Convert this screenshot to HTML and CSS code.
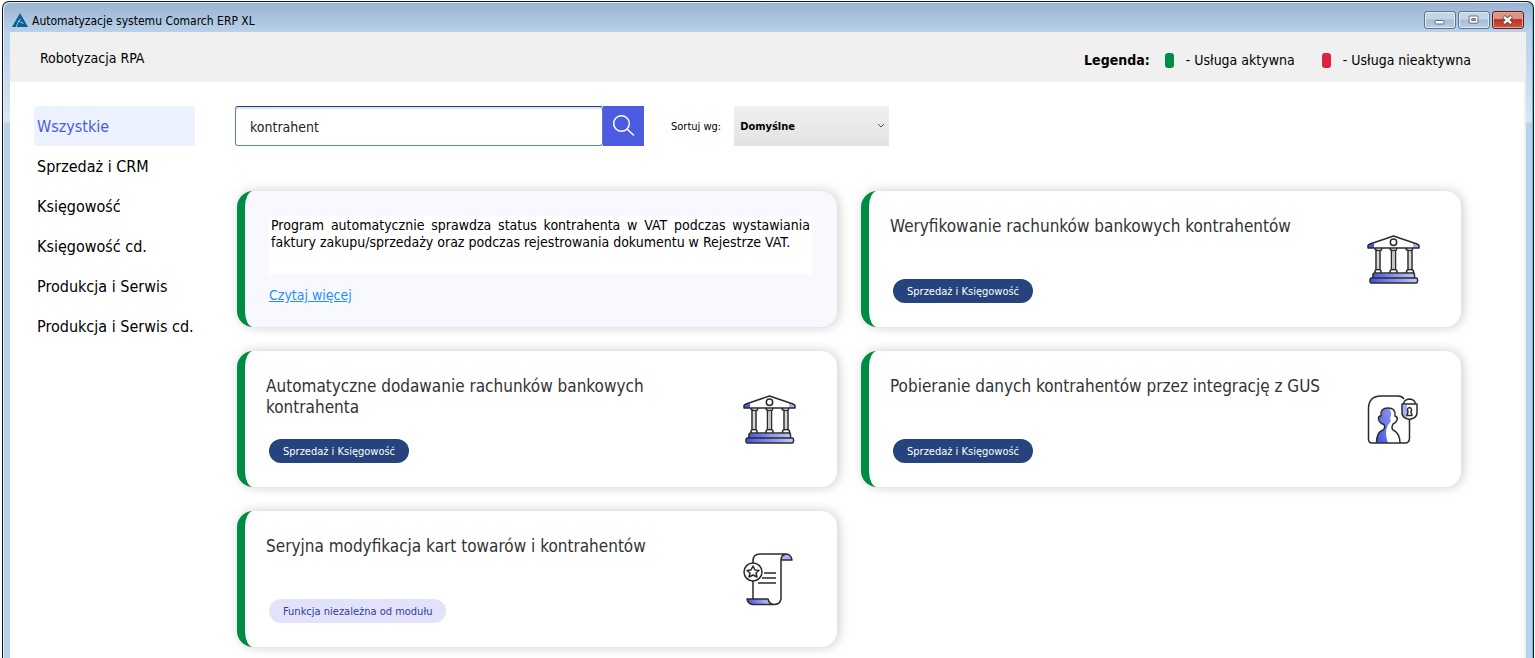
FILE: index.html
```
<!DOCTYPE html>
<html lang="pl">
<head>
<meta charset="utf-8">
<meta name="viewport" content="width=device-width, initial-scale=1">
<title>Automatyzacje systemu Comarch ERP XL</title>
<link rel="stylesheet" href="styles.css">
</head>
<body>
<svg class="defs" aria-hidden="true">
  <defs>
    <linearGradient id="violet" x1="0" x2="1" y1="0" y2="0">
      <stop offset="0" stop-color="#4353e0"/>
      <stop offset="1" stop-color="#c6caf8"/>
    </linearGradient>
    <linearGradient id="body-violet" x1="1" x2="0" y1="0" y2="1">
      <stop offset="0" stop-color="#8f98f2"/>
      <stop offset="1" stop-color="#3f50e0"/>
    </linearGradient>
    <symbol id="bank" viewBox="0 0 54 50">
      <path d="M1 13V10L7 7.500V13Z" fill="#4b5ae2"/>
      <path d="M52 13V10L46 7.500V13Z" fill="#aab0f5"/>
      <path d="M6 38.500H47L48 43H5Z" fill="url(#violet)"/>
      <rect x="3" y="43" width="47.500" height="5" rx="1.500" fill="url(#violet)"/>
      <g fill="none" stroke="#2b2b2b" stroke-width="1.500" stroke-linejoin="round">
        <path d="M1 13V10.500Q1.200 9.600 3 9L26.500 1L50 9Q52 9.600 52 10.500V13Z"/>
        <circle cx="26.500" cy="7.200" r="3.200"/>
        <path d="M8 13q0 2.500 3 2.500t3 0q0 0 1-2.500M9 15.500V35M13 15.500V35M8 38v-1.500q0-2 3-2t3 2V38"/>
        <path d="M23 13q0 2.500 3 2.500t3 0q0 0 1-2.500M24.500 15.500V35M28.500 15.500V35M23 38v-1.500q0-2 3.500-2t3.500 2V38"/>
        <path d="M39 13q0 2.500 3 2.500t3 0q0 0 1-2.500M41 15.500V35M45 15.500V35M39.500 38v-1.500q0-2 3.500-2t3.500 2V38"/>
        <path d="M6 43V39.500Q6 38 7.500 38H46Q47.500 38 47.500 39.500V43"/>
        <rect x="3" y="43" width="47.500" height="5" rx="1.500"/>
      </g>
      <path d="M11 17V34M26.500 17V34M43 17V34" stroke="#bbb" stroke-width="1.200"/>
    </symbol>
    <symbol id="person" viewBox="0 0 54 50">
      <path d="M9 48Q9 38 16 35Q19 34 17 30Q12 27 12 23Q12 20 14 20Q14 13 22 13.500Q26 18 23 23Q25 26 21 30Q17 37 21 48Z" fill="url(#body-violet)"/>
      <path d="M35 10H40V23L37 21Q35 20 35 18Z" fill="#aab0f5"/>
      <g fill="none" stroke="#2b2b2b" stroke-width="1.500" stroke-linejoin="round">
        <path d="M37 4Q35 1 31 1H14Q2 1 1.500 13V44Q1.500 48 5 48H38Q42.500 48 42.500 43V24.500"/>
        <path d="M9.500 48Q9.500 38 15 35.500Q19 34 17 29.500Q12 28 11.500 24Q11 21 14 21Q13 13 21 13Q29 13 28 21Q31 22 30 25Q29 28 26 29Q24 33 26 35Q33 38 33 48"/>
        <path d="M36.500 9Q37 4.500 42.500 4Q48 4.500 48.500 9M35 9H50V18Q50 21 47 23L42.500 24.500L38 23Q35 21 35 18Z"/>
        <path d="M41 17Q39.500 13 42.500 12.500Q45.500 13 44 17L45 20.500H40Z"/>
      </g>
    </symbol>
    <symbol id="scroll" viewBox="0 0 54 54">
      <path d="M38 7Q38 1 43 1Q48 1 49 7Z" fill="#aab0f5"/>
      <path d="M4 46H25Q27 48 28 51.500H10Q5 51 4 46Z" fill="url(#violet)"/>
      <g fill="none" stroke="#2b2b2b" stroke-width="1.500" stroke-linejoin="round">
        <path d="M10 10V8Q10 1 17 1H43Q48 1 49 7H38V46Q37 51.500 31 51.500H10Q5 51 4 46H25Q26 51 31 51.500M38 7Q38 2 43 1M10 27V46"/>
        <circle cx="10" cy="19" r="9" fill="#fff"/>
        <path d="M10 13L12 17L16 17.500L13 20L14 24L10 22L6 24L7 20L4 17.500L8 17Z"/>
        <path d="M21 20H33M19 25H33M15 30H33"/>
      </g>
    </symbol>
  </defs>
</svg>
<div class="window">
  <div class="titlebar">
    <svg class="app-icon" viewBox="0 0 16 14" aria-hidden="true">
      <path d="M8 0L16 14H0Z" fill="#07609a"/>
      <path d="M4.200 14L6.500 8L11.500 10.500M6.500 8L9 6" fill="none" stroke="#a9c3df"/>
    </svg>
    <span class="window-title">Automatyzacje systemu Comarch ERP XL</span>
    <div class="window-buttons">
      <button class="win-button" type="button" aria-label="Minimalizuj"><svg viewBox="0 0 32 18"><rect x="10.500" y="9.500" width="10" height="4" rx="1" fill="#fff" stroke="#535f70"/></svg></button>
      <button class="win-button" type="button" aria-label="Maksymalizuj"><svg viewBox="0 0 32 18"><rect x="10.500" y="4.500" width="10" height="8" rx="1" fill="#fff" stroke="#535f70"/><rect x="13.500" y="7.500" width="4" height="2" fill="#9db6d2" stroke="#535f70"/></svg></button>
      <button class="win-button close" type="button" aria-label="Zamknij"><svg viewBox="0 0 32 18"><path d="M11 5L20 13M20 5L11 13" stroke="#59434b" stroke-width="4.500"/><path d="M11.500 5.500L19.500 12.500M19.500 5.500L11.500 12.500" stroke="#fff" stroke-width="2.800"/></svg></button>
    </div>
  </div>
  <div class="client">
    <header class="header">
      <h1 class="heading">Robotyzacja RPA</h1>
      <div class="legend">
        <strong>Legenda:</strong>
        <span class="legend-item"><i class="mark active"></i>- Usługa aktywna</span>
        <span class="legend-item"><i class="mark inactive"></i>- Usługa nieaktywna</span>
      </div>
    </header>
    <div class="body">
      <nav class="sidebar">
        <a class="nav-item selected" href="#">Wszystkie</a>
        <a class="nav-item" href="#">Sprzedaż i CRM</a>
        <a class="nav-item" href="#">Księgowość</a>
        <a class="nav-item" href="#">Księgowość cd.</a>
        <a class="nav-item" href="#">Produkcja i Serwis</a>
        <a class="nav-item" href="#">Produkcja i Serwis cd.</a>
      </nav>
      <main class="main">
        <form class="toolbar">
          <div class="search">
            <input class="search-input" type="text" value="kontrahent" aria-label="Szukaj">
            <button class="search-button" type="button" aria-label="Szukaj"><svg viewBox="0 0 22 22"><circle cx="8.500" cy="8.500" r="7.800"/><path d="M14 14L21 20.500"/></svg></button>
          </div>
          <label class="sort-label" for="sort">Sortuj wg:</label>
          <div class="sort">
            <select class="sort-select" id="sort"><option>Domyślne</option></select>
            <svg class="chevron" viewBox="0 0 8 6" aria-hidden="true"><path d="M1 1L4 4L7 1"/></svg>
          </div>
        </form>
        <div class="cards">
          <article class="card hovered">
            <p class="description">Program automatycznie sprawdza status kontrahenta w VAT podczas wystawiania faktury zakupu/sprzedaży oraz podczas rejestrowania dokumentu w Rejestrze VAT.</p>
            <a class="more" href="#">Czytaj więcej</a>
          </article>
          <article class="card">
            <div class="card-text"><h2 class="card-title">Weryfikowanie rachunków bankowych kontrahentów</h2><span class="tag">Sprzedaż i Księgowość</span></div>
            <svg class="card-icon" aria-hidden="true"><use href="#bank"/></svg>
          </article>
          <article class="card">
            <div class="card-text"><h2 class="card-title">Automatyczne dodawanie rachunków bankowych kontrahenta</h2><span class="tag">Sprzedaż i Księgowość</span></div>
            <svg class="card-icon" aria-hidden="true"><use href="#bank"/></svg>
          </article>
          <article class="card">
            <div class="card-text"><h2 class="card-title">Pobieranie danych kontrahentów przez integrację z GUS</h2><span class="tag">Sprzedaż i Księgowość</span></div>
            <svg class="card-icon" aria-hidden="true"><use href="#person"/></svg>
          </article>
          <article class="card">
            <div class="card-text"><h2 class="card-title">Seryjna modyfikacja kart towarów i kontrahentów</h2><span class="tag light">Funkcja niezależna od modułu</span></div>
            <svg class="card-icon" aria-hidden="true"><use href="#scroll"/></svg>
          </article>
        </div>
      </main>
    </div>
  </div>
</div>
</body>
</html>
```
FILE: styles.css
```
* { box-sizing: border-box; }
html { height: 100%; overflow: hidden; }
body {
  height: 100%;
  margin: 0;
  padding: 1px 1px 0 2px;
  background: #fff;
  color: #000;
  font-family: Tahoma, "DejaVu Sans Condensed", "Noto Sans", sans-serif;
  font-size: 14px;
}
h1, h2, p { margin: 0; font-weight: 400; }
button, input, select { font: inherit; color: inherit; }
.defs { position: absolute; width: 0; height: 0; }

.window {
  display: flex;
  flex-direction: column;
  height: 100%;
  padding: 0 7px;
  border: 1px solid #14191f;
  border-bottom: 0;
  border-radius: 7px 7px 0 0;
  background:
    linear-gradient(#99b4d1, #b9d1ea) 0 0 / 100% 30px no-repeat,
    linear-gradient(#b9d1ea 30px, #d9e6f4 119px, #b9d1ea 122px);
  box-shadow: inset -1px 0 #35c9ee, inset 1px 1px #e4eef8;
}
.titlebar {
  display: flex;
  align-items: center;
  height: 30px;
  padding: 6px 2px 0;
  flex: none;
}
.app-icon { width: 16px; height: 14px; }
.window-title { margin-left: 4px; padding-top: 2px; font-size: 12px; }
.window-buttons { display: flex; gap: 2px; margin-left: auto; }
.win-button {
  width: 32px;
  height: 18px;
  padding: 0;
  border: 1px solid #62758b;
  border-radius: 3px;
  background: linear-gradient(#c4d5e8 45%, #a4bcd6 50%, #bdd0e5);
  box-shadow: inset 0 0 0 1px #dce8f4;
}
.win-button svg { display: block; width: 100%; height: 100%; }
.win-button.close {
  border-color: #5b1b1b;
  background: linear-gradient(#dc9485 40%, #b93222 48%, #c9593b);
  box-shadow: inset 0 0 0 1px #e3aaa0;
}

.client { flex: 1; min-height: 0; background: #fff; border-right: 2px solid #f0f0f0; }
.header {
  display: flex;
  align-items: center;
  justify-content: space-between;
  height: 50px;
  padding: 2px 53px 0 30px;
  background: #f0f0f0;
}
.heading { font-size: 14px; }
.legend { display: flex; align-items: center; padding-top: 4px; }
.legend-item { display: flex; align-items: center; margin-left: 15px; }
.legend-item + .legend-item { margin-left: 27px; }
.mark { width: 9px; height: 15px; margin-right: 12px; border-radius: 3px; }
.active { background: #008c45; }
.inactive { background: #dc2344; }

.body { display: flex; gap: 40px; padding: 24px 63px 0 24px; }
.sidebar { width: 161px; flex: none; }
.nav-item {
  display: block;
  padding: 2px 3px 0;
  border-radius: 3px;
  color: #000;
  font-size: 16px;
  line-height: 38px;
  text-decoration: none;
  white-space: nowrap;
}
.nav-item.selected { background: #ecf2ff; color: #4b5be2; }

.main { flex: 1; min-width: 0; }
.toolbar { display: flex; align-items: center; height: 40px; }
.search { display: flex; width: 409px; height: 40px; }
.search-input {
  flex: 1;
  min-width: 0;
  padding: 2px 14px 0;
  border: 1px solid #5a7fbb;
  border-top-color: #233d78;
  border-radius: 3px;
  box-shadow: inset 0 2px #dce2f0;
  color: #222;
  outline: 0;
}
.search-button { width: 41px; padding: 0; border: 0; background: #4b5be2; }
.search-button svg {
  display: block;
  width: 22px;
  height: 22px;
  margin: auto;
  fill: none;
  stroke: #fff;
  stroke-width: 1.5;
}
.sort-label { margin: 0 13px 0 27px; font-size: 11px; }
.sort { position: relative; width: 155px; height: 40px; }
.sort-select {
  width: 100%;
  height: 100%;
  padding: 0 6px;
  border: 0;
  border-radius: 0;
  background: linear-gradient(#f0f0f0, #e3e3e3);
  appearance: none;
  font-size: 11px;
  font-weight: 700;
}
.chevron {
  position: absolute;
  top: 17px;
  right: 4px;
  width: 8px;
  height: 6px;
  fill: none;
  stroke: #555;
}

.cards {
  display: grid;
  grid-template-columns: repeat(2, minmax(0, 1fr));
  grid-auto-rows: 136px;
  gap: 24px;
  padding: 45px 0 0 2px;
}
.card {
  display: flex;
  align-items: center;
  justify-content: space-between;
  padding: 2px 40px 0 21px;
  border-left: 8px solid #008c45;
  border-radius: 16px;
  background: #fff;
  box-shadow: 2px 0 12px rgba(0, 0, 0, 0.2);
}
.card-text {
  display: flex;
  flex-direction: column;
  align-items: flex-start;
  justify-content: space-between;
  width: 440px;
  height: 100%;
  padding: 23px 0 24px;
}
.card-title { color: #333; font-size: 17px; line-height: 21px; }
.tag {
  margin-left: 3px;
  padding: 1px 14px 0;
  border-radius: 12px;
  background: #26437e;
  color: #fff;
  font-size: 11px;
  line-height: 23px;
}
.tag.light { background: #e2e3fa; color: #303b9b; }
.card-icon { width: 54px; height: 54px; flex: none; }
.card.hovered {
  flex-direction: column;
  align-items: flex-start;
  padding: 25px 25px 23px 24px;
  background: #f8f9ff;
}
.description {
  width: 100%;
  min-height: 58px;
  padding: 1px 2px;
  background: #fff;
  font-size: 14px;
  line-height: 17px;
  text-align: justify;
}
.more { color: #1e90ff; font-size: 14px; line-height: 17px; }
```
